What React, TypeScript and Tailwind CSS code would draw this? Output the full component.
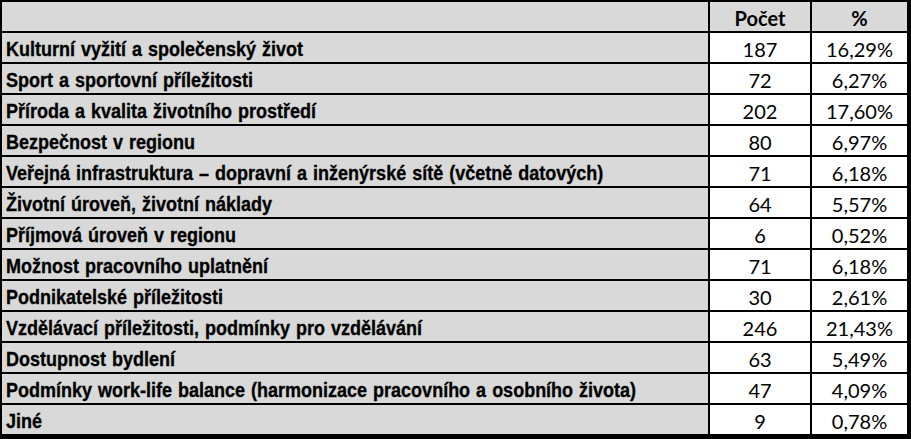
import React from "react";

const rows: [string, string, string][] = [
  ["Kulturní vyžití a společenský život", "187", "16,29%"],
  ["Sport a sportovní příležitosti", "72", "6,27%"],
  ["Příroda a kvalita životního prostředí", "202", "17,60%"],
  ["Bezpečnost v regionu", "80", "6,97%"],
  ["Veřejná infrastruktura – dopravní a inženýrské sítě (včetně datových)", "71", "6,18%"],
  ["Životní úroveň, životní náklady", "64", "5,57%"],
  ["Příjmová úroveň v regionu", "6", "0,52%"],
  ["Možnost pracovního uplatnění", "71", "6,18%"],
  ["Podnikatelské příležitosti", "30", "2,61%"],
  ["Vzdělávací příležitosti, podmínky pro vzdělávání", "246", "21,43%"],
  ["Dostupnost bydlení", "63", "5,49%"],
  ["Podmínky work-life balance (harmonizace pracovního a osobního života)", "47", "4,09%"],
  ["Jiné", "9", "0,78%"],
];

const num = "[font-family:Lato,'Liberation_Sans',sans-serif] text-[20px] leading-none text-black";

export default function App() {
  return (
    <div className="w-[911px] h-[439px] bg-white">
      <div className="grid grid-cols-[706px_100px_95px] gap-[2px] bg-black border-black border-l-2 border-t-2 border-r-4 border-b-[5px] w-[911px]">
        <div className="h-[29px] bg-[#d9d9d9]" />
        <div className={`h-[29px] bg-[#d9d9d9] flex items-center justify-center pt-[3px] font-bold ${num}`}>Počet</div>
        <div className={`h-[29px] bg-[#d9d9d9] flex items-center justify-center pt-[3px] font-bold ${num}`}>%</div>
        {rows.map(([label, count, pct], i) => (
          <React.Fragment key={i}>
            <div className="h-[29px] bg-[#d9d9d9] flex items-center pl-[4px] pt-[3px] [font-family:'Liberation_Sans',Arial,sans-serif] font-bold text-[18px] leading-none text-black whitespace-nowrap [word-spacing:1px] [-webkit-text-stroke:0.3px_black]">
              <span className="inline-block origin-center scale-y-[1.1]">{label}</span>
            </div>
            <div className={`h-[29px] bg-white flex items-center justify-center pt-[3px] ${num}`}>{count}</div>
            <div className={`h-[29px] bg-white flex items-center justify-center pt-[3px] ${num}`}>{pct}</div>
          </React.Fragment>
        ))}
      </div>
    </div>
  );
}
